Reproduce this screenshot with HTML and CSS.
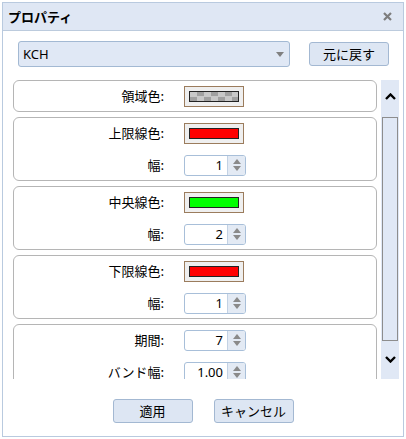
FILE: index.html
```html
<!DOCTYPE html>
<html lang="ja">
<head>
<meta charset="utf-8">
<link rel="stylesheet" href="styles.css">
</head>
<body>
<div class="dialog">
  <div class="titlebar">
    <span class="title">プロパティ</span>
    <svg class="close" width="9" height="9" viewBox="0 0 9 9"><path d="M1 1 L8 8 M8 1 L1 8" stroke="#7d7d7d" stroke-width="2.2" fill="none"/></svg>
  </div>
  <div class="toolbar">
    <div class="select"><span class="select-text">KCH</span><span class="caret"></span></div>
    <button class="btn reset">元に戻す</button>
  </div>
  <div class="scrollarea">
    <div class="content">
      <div class="group">
        <div class="row"><span class="lbl">領域色:</span><span class="swatch"><span class="fill checker"></span></span></div>
      </div>
      <div class="group">
        <div class="row"><span class="lbl">上限線色:</span><span class="swatch"><span class="fill red"></span></span></div>
        <div class="row"><span class="lbl">幅:</span><span class="spin"><span class="val">1</span><span class="arrows"><span class="up"></span><span class="down"></span></span></span></div>
      </div>
      <div class="group">
        <div class="row"><span class="lbl">中央線色:</span><span class="swatch"><span class="fill green"></span></span></div>
        <div class="row"><span class="lbl">幅:</span><span class="spin"><span class="val">2</span><span class="arrows"><span class="up"></span><span class="down"></span></span></span></div>
      </div>
      <div class="group">
        <div class="row"><span class="lbl">下限線色:</span><span class="swatch"><span class="fill red"></span></span></div>
        <div class="row"><span class="lbl">幅:</span><span class="spin"><span class="val">1</span><span class="arrows"><span class="up"></span><span class="down"></span></span></span></div>
      </div>
      <div class="group">
        <div class="row"><span class="lbl">期間:</span><span class="spin"><span class="val">7</span><span class="arrows"><span class="up"></span><span class="down"></span></span></span></div>
        <div class="row"><span class="lbl">バンド幅:</span><span class="spin"><span class="val">1.00</span><span class="arrows"><span class="up"></span><span class="down"></span></span></span></div>
      </div>
    </div>
    <div class="scrollbar">
      <div class="sb-btn sb-up"><svg width="11" height="7" viewBox="0 0 11 7"><polyline points="1,6 5.5,1.5 10,6" fill="none" stroke="#000" stroke-width="2.4"/></svg></div>
      <div class="thumb"></div>
      <div class="sb-btn sb-down"><svg width="11" height="7" viewBox="0 0 11 7"><polyline points="1,1 5.5,5.5 10,1" fill="none" stroke="#000" stroke-width="2.4"/></svg></div>
    </div>
  </div>
  <div class="footer">
    <button class="btn action">適用</button>
    <button class="btn action">キャンセル</button>
  </div>
</div>
</body>
</html>
```
FILE: styles.css
```css
* { box-sizing: border-box; }
html, body { margin: 0; padding: 0; background: #fff; }
body {
  font-family: "Noto Sans", "Noto Sans CJK JP", sans-serif;
  font-size: 13px;
  color: #000;
}
.dialog {
  margin: 2px 0 0 2px;
  width: 402px;
  height: 435px;
  border: 1px solid #b9cadf;
  display: flex;
  flex-direction: column;
  background: #fff;
}
.titlebar {
  height: 28px;
  flex: none;
  background: #dfe7f4;
  border-bottom: 1px solid #bccbdd;
  display: flex;
  align-items: center;
  justify-content: space-between;
  padding: 0 11px 0 5px;
}
.title {
  font-family: "Noto Sans CJK JP", sans-serif;
  font-weight: bold;
  font-size: 13px;
  line-height: 16px;
}
.close { display: block; }
.toolbar {
  flex: none;
  height: 49px;
  display: flex;
  align-items: center;
  padding: 10px 0 13px 15px;
}
.select {
  width: 272px;
  height: 26px;
  border: 1px solid #a3b9d3;
  border-radius: 3px;
  background: #e0e8f5;
  display: flex;
  align-items: center;
  justify-content: space-between;
  padding: 0 5px 0 4px;
}
.select-text { font-size: 13px; line-height: 16px; }
.caret {
  width: 0; height: 0;
  border-left: 4.5px solid transparent;
  border-right: 4.5px solid transparent;
  border-top: 5px solid #808080;
}
.btn {
  font-family: "Noto Sans CJK JP", sans-serif;
  font-size: 13px;
  line-height: 16px;
  color: #000;
  background: #dde6f3;
  border: 1px solid #a3b8d2;
  border-radius: 3px;
  padding: 0;
  width: 80px;
  height: 24px;
}
.reset { margin-left: 19px; }
.scrollarea {
  flex: none;
  height: 299px;
  display: flex;
  padding: 0 4px 0 10px;
  gap: 4px;
}
.content {
  width: 364px;
  height: 100%;
  overflow: hidden;
}
.group {
  border: 1px solid #b5b5b5;
  border-radius: 6px;
  padding: 4px 0;
  margin-bottom: 5px;
}
.row {
  height: 22px;
  display: flex;
  align-items: center;
}
.row + .row { margin-top: 10px; }
.lbl {
  width: 150px;
  margin-right: 20px;
  text-align: right;
  font-family: "Noto Sans CJK JP", sans-serif;
  font-size: 13px;
  line-height: 16px;
}
.swatch {
  width: 60px;
  height: 21px;
  border: 1px solid #9b7c5d;
  background: #efefef;
  padding: 4px;
  display: flex;
}
.fill {
  flex: 1;
  border: 1px solid #222;
}
.red { background: #ff0000; }
.green { background: #00ff00; }
.checker {
  background-color: #c8c8c8;
  background-image: conic-gradient(#a0a0a0 25%, transparent 0 50%, #a0a0a0 0 75%, transparent 0);
  background-size: 14px 9px;
}
.spin {
  width: 62px;
  height: 21px;
  border: 1px solid #a8bfd9;
  border-radius: 3px;
  display: flex;
  overflow: hidden;
}
.val {
  width: 42px;
  text-align: right;
  padding-right: 4px;
  font-size: 13px;
  line-height: 19px;
}
.arrows {
  flex: 1;
  border-left: 1px solid #c3d2e4;
  background: #e3eaf4;
  display: flex;
  flex-direction: column;
  align-items: center;
  justify-content: space-around;
  padding: 2px 0;
}
.up {
  width: 0; height: 0;
  border-left: 4.5px solid transparent;
  border-right: 4.5px solid transparent;
  border-bottom: 5px solid #8a8a8a;
}
.down {
  width: 0; height: 0;
  border-left: 4.5px solid transparent;
  border-right: 4.5px solid transparent;
  border-top: 5px solid #8a8a8a;
}
.scrollbar {
  width: 18px;
  height: 299px;
  background: #e0e8f5;
  display: flex;
  flex-direction: column;
  align-items: center;
}
.sb-btn {
  display: flex;
  align-items: center;
  justify-content: center;
  width: 18px;
}
.sb-up { height: 37px; padding-bottom: 4px; }
.sb-down { height: 38px; padding-bottom: 2px; }
.thumb {
  width: 16px;
  height: 224px;
  border: 1px solid #8d8d8d;
  background: #e0e8f5;
}
.footer {
  flex: none;
  display: flex;
  justify-content: center;
  gap: 21px;
  padding-top: 20px;
}
```
